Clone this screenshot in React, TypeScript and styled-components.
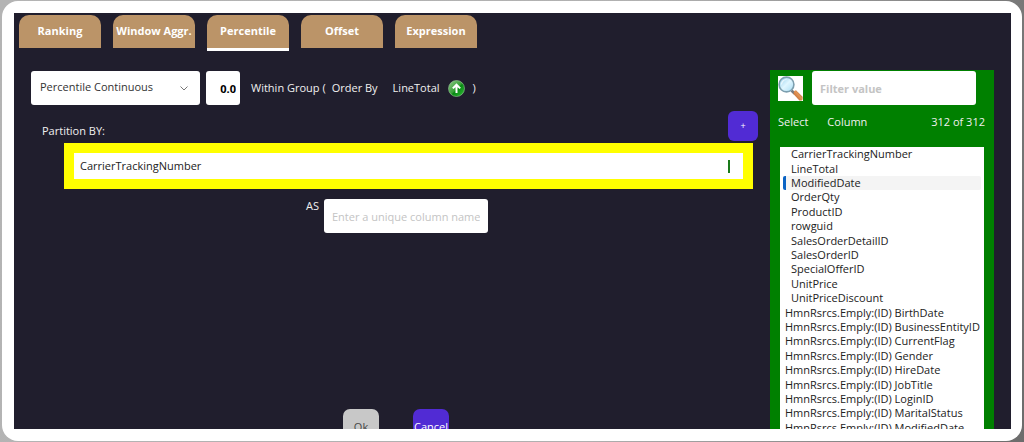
import React, { useState } from "react";
import styled, { createGlobalStyle } from "styled-components";

const GlobalStyle = createGlobalStyle`
  *, *::before, *::after { box-sizing: border-box; }
  body {
    margin: 0;
    overflow: hidden;
    background: linear-gradient(100deg, #b4b4b4 0%, #b0b0b0 60%, #6c6c6c 100%);
    font-family: "Open Sans", "Noto Sans", sans-serif;
    font-size: 11px;
    line-height: 16px;
    color: #f0f0f0;
  }
  button, input, select { font: inherit; margin: 0; border: 0; outline: 0; }
  ul { list-style: none; margin: 0; padding: 0; }
`;

const Page = styled.div`
  height: 100vh;
  padding: 1px 2px;
`;

const Frame = styled.div`
  height: 100%;
  padding: 12px 11px 12px 12px;
  border-radius: 16px;
  background: #fff;
`;

const Stage = styled.main`
  display: flex;
  flex-direction: column;
  height: 100%;
  overflow: hidden;
  background: #201e2d;
`;

const Tabs = styled.nav`
  display: flex;
  flex: none;
  gap: 12px;
  height: 57px;
  padding: 2px 5px;
`;

const Tab = styled.button<{ $active: boolean }>`
  width: 82px;
  height: 36px;
  padding: 0;
  border-bottom: 3px solid ${(p) => (p.$active ? "#fff" : "transparent")};
  background: none;
  color: #fff;
  font-weight: 700;
`;

const TabFace = styled.span`
  display: block;
  height: 33px;
  border-radius: 10px 10px 0 0;
  background: #bb9468;
  line-height: 32px;
  white-space: nowrap;
`;

const Columns = styled.div`
  display: flex;
  flex: none;
`;

const Editor = styled.section`
  display: flex;
  flex: 1;
  flex-direction: column;
  min-width: 0;
  padding: 1px 12px 0 17px;
`;

const FunctionRow = styled.div`
  display: flex;
  align-items: center;
  height: 34px;
`;

const SelectBox = styled.div`
  position: relative;
  width: 169px;
  margin-right: 6px;

  svg {
    position: absolute;
    top: 14px;
    right: 11px;
    pointer-events: none;
  }
`;

const Select = styled.select`
  width: 100%;
  height: 34px;
  padding: 0 24px 2px 9px;
  border-radius: 3px;
  appearance: none;
  background: #fff;
  color: #333;
`;

const Field = styled.input<{ $bold?: boolean }>`
  width: 164px;
  height: 34px;
  padding: 0 8px;
  border-radius: 3px;
  background: #fff;
  color: #222;
  font-weight: ${(p) => (p.$bold ? 700 : 400)};

  &::placeholder { color: #c4c4c4; opacity: 1; }
`;

const NumberField = styled(Field)`
  width: 34px;
  padding: 0 4px 0 0;
  color: #000;
  text-align: right;
`;

const Phrase = styled.div`
  display: flex;
  align-items: center;
  padding-left: 11px;
  white-space: nowrap;
`;

const Word = styled.span<{ $gap: number }>`
  margin-right: ${(p) => p.$gap}px;
`;

const SortButton = styled.button`
  display: flex;
  margin-right: 8px;
  padding: 0;
  background: none;
`;

const PartitionHead = styled.div`
  display: flex;
  align-items: center;
  justify-content: space-between;
  height: 38px;
  padding: 4px 0 0 11px;
`;

const PartitionLabel = styled.span`
  padding-top: 10px;
`;

const AddButton = styled.button`
  width: 30px;
  height: 30px;
  padding: 0;
  border-radius: 6px;
  background: #512bd4;
  color: #fff;
  font-size: 9px;
`;

const PartitionList = styled.ul`
  margin: 0 5px 0 33px;
  padding: 10px;
  background: #ff0;
`;

const PartitionItem = styled.li`
  display: flex;
  align-items: center;
  justify-content: space-between;
  height: 26px;
  padding: 0 13px 0 6px;
  background: #fff;
  color: #222;
`;

const Grip = styled.span`
  width: 2px;
  height: 13px;
  background: #1a7a1a;
`;

const AliasRow = styled.label`
  display: flex;
  gap: 5px;
  justify-content: flex-start;
  margin-top: 9px;
  padding-left: 275px;

  ${Field} { margin-top: 1px; }
`;

const Actions = styled.div`
  display: flex;
  gap: 34px;
  margin-top: 176px;
  padding-left: 312px;
`;

const Action = styled.button<{ $muted?: boolean }>`
  width: 36px;
  height: 36px;
  padding: 0;
  overflow: hidden;
  border-radius: 7px;
  background: ${(p) => (p.$muted ? "#c8c8c8" : "#512bd4")};
  color: ${(p) => (p.$muted ? "#444" : "#fff")};
`;

const Picker = styled.aside`
  width: 224px;
  margin-right: 17px;
  padding: 0 10px;
  background: #008000;
`;

const FilterRow = styled.div`
  display: flex;
  gap: 9px;
  padding-top: 1px;
`;

const SearchButton = styled.button`
  width: 25px;
  height: 25px;
  margin: 5px 0 0 -2px;
  padding: 0;
  background: #fff;

  svg { display: block; }
`;

const Heading = styled.div`
  display: flex;
  align-items: center;
  margin: 9px -1px 17px -2px;
`;

const Count = styled.span`
  margin-left: auto;
`;

const ColumnList = styled.ul`
  display: grid;
  grid-template-rows: repeat(20, 1fr);
  height: 288px;
  padding: 0 3px;
  background: #fff;
`;

const ColumnItem = styled.li<{ $nested: boolean; $selected: boolean }>`
  display: flex;
  align-items: center;
  min-height: 0;
  padding-left: ${(p) => (p.$nested ? 5 : 2)}px;
  border-left: ${(p) => (p.$nested ? 3 : 0)}px solid ${(p) => (p.$selected ? "#0a63c4" : "transparent")};
  border-radius: 2px;
  background: ${(p) => (p.$selected ? "#f4f4f4" : "transparent")};
  background-clip: padding-box;
  color: #222;
  line-height: 14px;
  white-space: nowrap;
`;

const ArrowUpBall = () => (
  <svg width="17" height="17" viewBox="0 0 17 17" aria-hidden="true">
    <defs>
      <linearGradient id="ball" x1="0" y1="0" x2="1" y2="1">
        <stop offset="0" stopColor="#8fc98a" />
        <stop offset="0.5" stopColor="#35a035" />
        <stop offset="0.55" stopColor="#078a12" />
        <stop offset="1" stopColor="#35bd3b" />
      </linearGradient>
    </defs>
    <circle cx="8.5" cy="8.5" r="8" fill="url(#ball)" stroke="#9ac89a" strokeWidth="0.6" />
    <path d="M8.5 13V5M4.8 8.4L8.5 4.7l3.7 3.7" fill="none" stroke="#fff" strokeWidth="2" />
  </svg>
);

const Magnifier = () => (
  <svg width="25" height="25" viewBox="0 0 25 25" aria-hidden="true">
    <defs>
      <linearGradient id="lens" x1="0" y1="0" x2="1" y2="1">
        <stop offset="0" stopColor="#8fcdeb" />
        <stop offset="0.5" stopColor="#e0f6ff" />
        <stop offset="1" stopColor="#a6dcf3" />
      </linearGradient>
      <linearGradient id="handle" x1="0" y1="1" x2="1" y2="0">
        <stop offset="0" stopColor="#a85320" />
        <stop offset="0.55" stopColor="#e39455" />
        <stop offset="1" stopColor="#93481d" />
      </linearGradient>
    </defs>
    <path d="M13.5 14.5l3 3" stroke="#777b80" strokeWidth="2.6" />
    <path d="M16.2 15l1.8-.8 6.6 6.6v2.8l-1 .9h-2.2l-6-6.6z" fill="url(#handle)" />
    <circle cx="8.5" cy="8.5" r="7.4" fill="url(#lens)" stroke="#7c9eae" strokeWidth="1.6" />
    <path d="M3.5 8.5a5 5 0 0 1 5-5" fill="none" stroke="#fff" strokeOpacity="0.7" strokeWidth="1.2" />
  </svg>
);

const tabNames = ["Ranking", "Window Aggr.", "Percentile", "Offset", "Expression"];

const ownColumns = [
  "CarrierTrackingNumber", "LineTotal", "ModifiedDate", "OrderQty", "ProductID", "rowguid",
  "SalesOrderDetailID", "SalesOrderID", "SpecialOfferID", "UnitPrice", "UnitPriceDiscount",
];

const employeeColumns = [
  "BirthDate", "BusinessEntityID", "CurrentFlag", "Gender", "HireDate",
  "JobTitle", "LoginID", "MaritalStatus", "ModifiedDate",
].map((name) => `HmnRsrcs.Emply:(ID) ${name}`);

export default function App() {
  const [tab, setTab] = useState("Percentile");
  const [selected, setSelected] = useState("ModifiedDate");

  return (
    <Page>
      <GlobalStyle />
      <Frame>
        <Stage>
          <Tabs role="tablist">
            {tabNames.map((name) => (
              <Tab key={name} role="tab" aria-selected={tab === name} $active={tab === name} onClick={() => setTab(name)}>
                <TabFace>{name}</TabFace>
              </Tab>
            ))}
          </Tabs>
          <Columns>
            <Editor>
              <FunctionRow>
                <SelectBox>
                  <Select aria-label="Percentile function" defaultValue="Percentile Continuous">
                    <option>Percentile Continuous</option>
                  </Select>
                  <svg width="10" height="7" viewBox="0 0 10 7" aria-hidden="true">
                    <path d="M1.5 1.5L5 5l3.5-3.5" fill="none" stroke="#777" />
                  </svg>
                </SelectBox>
                <NumberField $bold aria-label="Percentile" defaultValue="0.0" />
                <Phrase>
                  <Word $gap={6}>Within Group (</Word>
                  <Word $gap={15}>Order By</Word>
                  <Word $gap={8}>LineTotal</Word>
                  <SortButton aria-label="Sort ascending"><ArrowUpBall /></SortButton>
                  <span>)</span>
                </Phrase>
              </FunctionRow>
              <PartitionHead>
                <PartitionLabel>Partition BY:</PartitionLabel>
                <AddButton aria-label="Add partition column">+</AddButton>
              </PartitionHead>
              <PartitionList>
                <PartitionItem>
                  CarrierTrackingNumber
                  <Grip />
                </PartitionItem>
              </PartitionList>
              <AliasRow>
                AS
                <Field placeholder="Enter a unique column name" />
              </AliasRow>
              <Actions>
                <Action $muted>Ok</Action>
                <Action>Cancel</Action>
              </Actions>
            </Editor>
            <Picker>
              <FilterRow>
                <SearchButton aria-label="Search"><Magnifier /></SearchButton>
                <Field $bold aria-label="Filter value" placeholder="Filter value" />
              </FilterRow>
              <Heading>
                <Word $gap={19}>Select</Word>
                <span>Column</span>
                <Count>312 of 312</Count>
              </Heading>
              <ColumnList role="listbox" aria-label="Columns">
                {[...ownColumns, ...employeeColumns].map((name, i) => (
                  <ColumnItem
                    key={name}
                    role="option"
                    aria-selected={selected === name}
                    $nested={i < ownColumns.length}
                    $selected={selected === name}
                    onClick={() => setSelected(name)}
                  >
                    {name}
                  </ColumnItem>
                ))}
              </ColumnList>
            </Picker>
          </Columns>
        </Stage>
      </Frame>
    </Page>
  );
}
